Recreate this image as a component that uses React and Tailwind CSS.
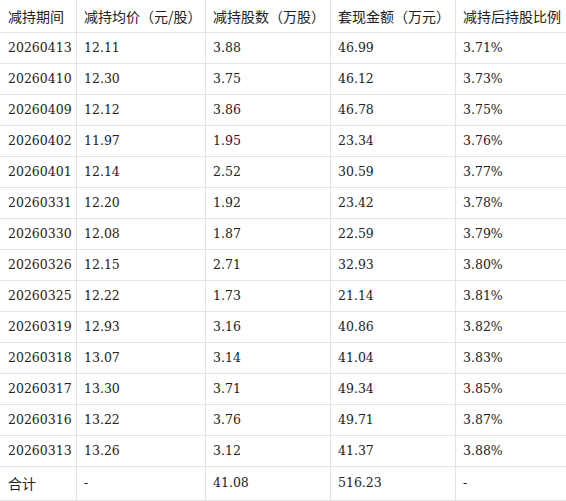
import React from 'react';

const headers = ['减持期间', '减持均价（元/股）', '减持股数（万股）', '套现金额（万元）', '减持后持股比例'];

const rows = [
    ['20260413', '12.11', '3.88', '46.99', '3.71%'],
    ['20260410', '12.30', '3.75', '46.12', '3.73%'],
    ['20260409', '12.12', '3.86', '46.78', '3.75%'],
    ['20260402', '11.97', '1.95', '23.34', '3.76%'],
    ['20260401', '12.14', '2.52', '30.59', '3.77%'],
    ['20260331', '12.20', '1.92', '23.42', '3.78%'],
    ['20260330', '12.08', '1.87', '22.59', '3.79%'],
    ['20260326', '12.15', '2.71', '32.93', '3.80%'],
    ['20260325', '12.22', '1.73', '21.14', '3.81%'],
    ['20260319', '12.93', '3.16', '40.86', '3.82%'],
    ['20260318', '13.07', '3.14', '41.04', '3.83%'],
    ['20260317', '13.30', '3.71', '49.34', '3.85%'],
    ['20260316', '13.22', '3.76', '49.71', '3.87%'],
    ['20260313', '13.26', '3.12', '41.37', '3.88%'],
];

const total = ['合计', '-', '41.08', '516.23', '-'];

const cjk = "font-['Noto_Sans_CJK_SC',sans-serif] text-[14px]";
const num = "font-['DejaVu_Serif','Noto_Sans_CJK_SC',serif] text-[12.5px]";

// fixed column tracks, last one takes what's left
const cols = 'grid grid-cols-[77px_129px_125px_125px_1fr]';

function Cell({ children, idx, font, h }) {
    const pad = idx === 0 ? 'pl-2' : 'pl-[7px]';
    const border = idx < 4 ? 'border-r border-[#e3e3e3]' : '';
    return (
        <div className={`flex items-center ${h} ${pad} ${border} ${font} text-[#222] whitespace-nowrap overflow-hidden`}>
            {children}
        </div>
    );
}

export default function App() {
    return (
        <div className="w-[566px] h-[501px] bg-white overflow-hidden">
            {/* Header */}
            <div className={`${cols} border-b border-[#e3e3e3]`}>
                {headers.map((h, i) => (
                    <Cell key={i} idx={i} font={cjk} h="h-8">{h}</Cell>
                ))}
            </div>

            {/* Body rows */}
            {rows.map((r, ri) => (
                <div key={ri} className={`${cols} border-b border-[#e3e3e3]`}>
                    {r.map((v, i) => (
                        <Cell key={i} idx={i} font={num} h="h-[30px]">{v}</Cell>
                    ))}
                </div>
            ))}

            {/* Total */}
            <div className={`${cols} border-b border-[#e3e3e3]`}>
                {total.map((v, i) => (
                    <Cell key={i} idx={i} font={i === 0 ? cjk : num} h="h-[33px]">{v}</Cell>
                ))}
            </div>
        </div>
    );
}
